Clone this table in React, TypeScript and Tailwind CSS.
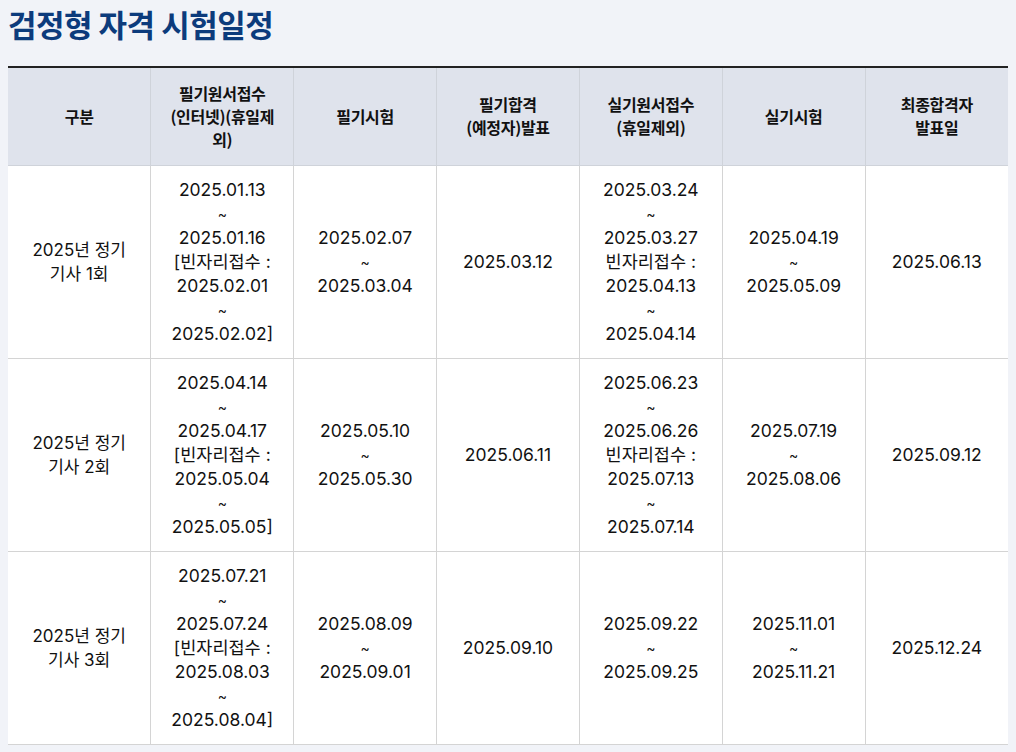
import React from "react";

const headers: string[][] = [
  ["구분"],
  ["필기원서접수", "(인터넷)(휴일제", "외)"],
  ["필기시험"],
  ["필기합격", "(예정자)발표"],
  ["실기원서접수", "(휴일제외)"],
  ["실기시험"],
  ["최종합격자", "발표일"],
];

const rows: string[][][] = [
  [
    ["2025년 정기", "기사 1회"],
    ["2025.01.13", "~", "2025.01.16", "[빈자리접수 :", "2025.02.01", "~", "2025.02.02]"],
    ["2025.02.07", "~", "2025.03.04"],
    ["2025.03.12"],
    ["2025.03.24", "~", "2025.03.27", "빈자리접수 :", "2025.04.13", "~", "2025.04.14"],
    ["2025.04.19", "~", "2025.05.09"],
    ["2025.06.13"],
  ],
  [
    ["2025년 정기", "기사 2회"],
    ["2025.04.14", "~", "2025.04.17", "[빈자리접수 :", "2025.05.04", "~", "2025.05.05]"],
    ["2025.05.10", "~", "2025.05.30"],
    ["2025.06.11"],
    ["2025.06.23", "~", "2025.06.26", "빈자리접수 :", "2025.07.13", "~", "2025.07.14"],
    ["2025.07.19", "~", "2025.08.06"],
    ["2025.09.12"],
  ],
  [
    ["2025년 정기", "기사 3회"],
    ["2025.07.21", "~", "2025.07.24", "[빈자리접수 :", "2025.08.03", "~", "2025.08.04]"],
    ["2025.08.09", "~", "2025.09.01"],
    ["2025.09.10"],
    ["2025.09.22", "~", "2025.09.25"],
    ["2025.11.01", "~", "2025.11.21"],
    ["2025.12.24"],
  ],
];

export default function App() {
  return (
    <div
      className="min-h-[752px] bg-[#f1f3f8] px-2 pt-[4px]"
      style={{ fontFamily: 'Inter, "Noto Sans CJK KR", sans-serif' }}
    >
      <h1
        className="text-[31px] font-bold leading-[40px] text-[#0c3b7c] tracking-[-0.5px]"
        style={{ fontFamily: '"Noto Sans CJK KR", sans-serif' }}
      >
        검정형 자격 시험일정
      </h1>
      <table className="mt-[22px] w-[1000px] table-fixed border-collapse border-t-2 border-t-[#222] bg-white">
        <thead>
          <tr className="bg-[#dfe3ec]">
            {headers.map((h, i) => (
              <th
                key={i}
                className={`h-[98px] border-b border-[#cfd3da] px-2 align-middle text-center text-[16px] font-bold leading-[23px] tracking-[-0.3px] text-[#111] ${
                  i > 0 ? "border-l" : ""
                }`}
                style={{ fontFamily: '"Noto Sans CJK KR", sans-serif' }}
              >
                {h.map((l, j) => (
                  <div key={j}>{l}</div>
                ))}
              </th>
            ))}
          </tr>
        </thead>
        <tbody>
          {rows.map((r, ri) => (
            <tr key={ri}>
              {r.map((c, ci) => (
                <td
                  key={ci}
                  className={`h-[193px] border-b border-[#d4d4d4] px-2 py-3 text-center align-middle text-[17.5px] leading-[24px] text-[#111] ${
                    ci > 0 ? "border-l" : ""
                  }`}
                >
                  {c.map((l, j) => (
                    <div
                      key={j}
                      className={l === "~" ? "text-[14px]" : ci === 0 ? "text-[17px]" : ""}
                    >
                      {l}
                    </div>
                  ))}
                </td>
              ))}
            </tr>
          ))}
        </tbody>
      </table>
    </div>
  );
}
